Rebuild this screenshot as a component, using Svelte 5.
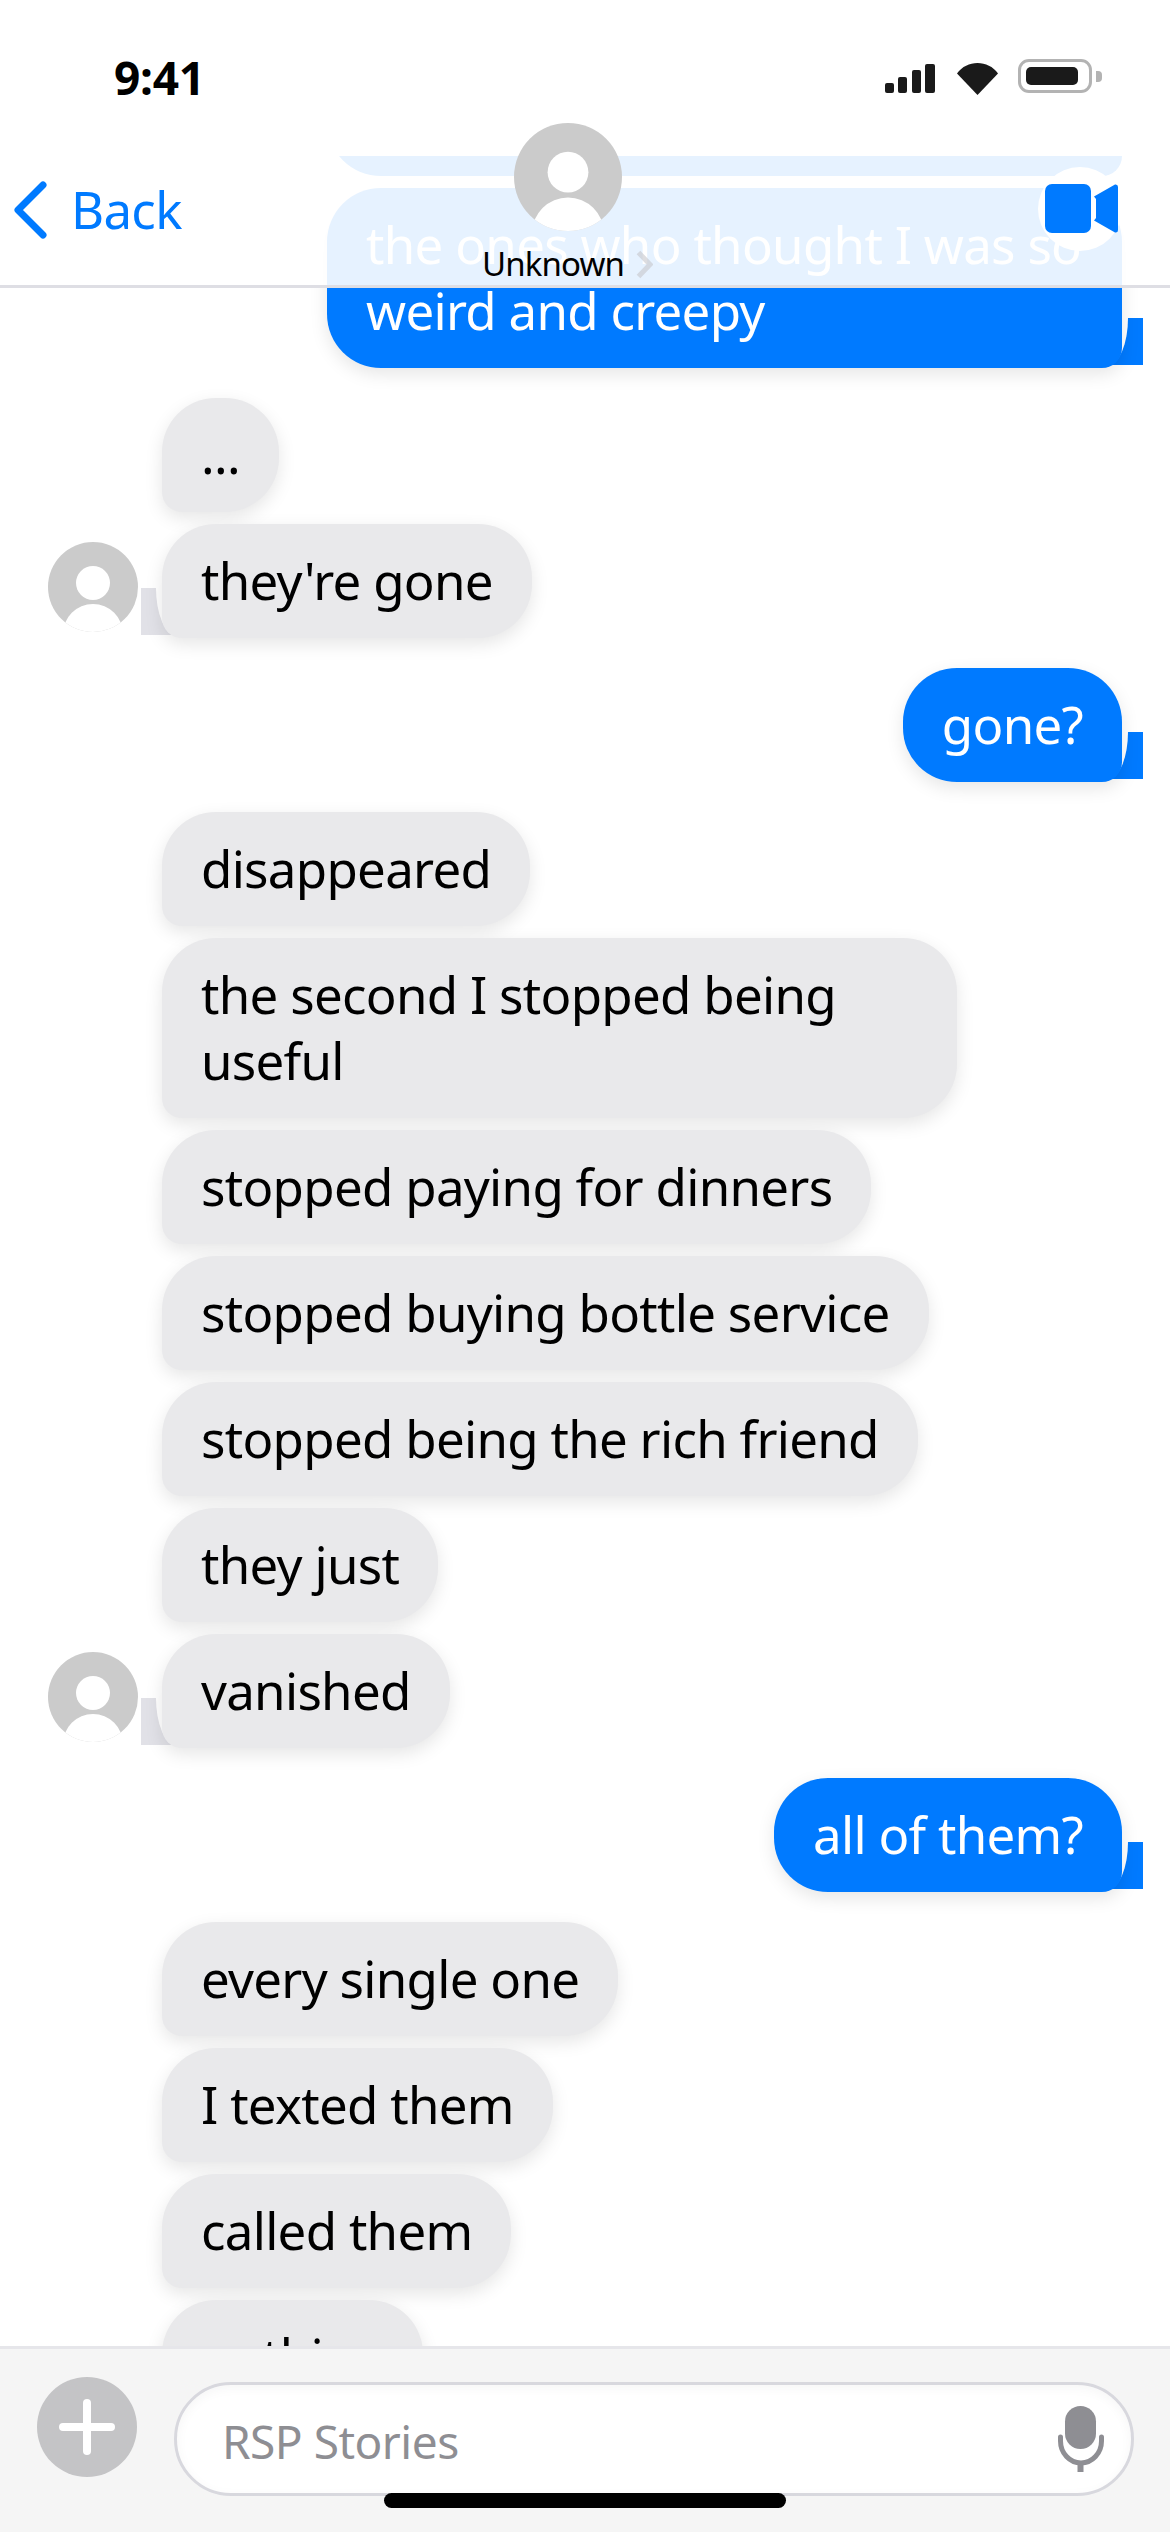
<script>
	// side: 'in' | 'out', tail/avatar on the last bubble of a run
	const messages = [
		{ side: 'out', text: 'the ones who thought I was so weird and creepy', tail: true },
		{ side: 'in', text: '...', first: true },
		{ side: 'in', text: "they're gone", tail: true },
		{ side: 'out', text: 'gone?', tail: true, first: true },
		{ side: 'in', text: 'disappeared', first: true },
		{ side: 'in', text: 'the second I stopped being useful' },
		{ side: 'in', text: 'stopped paying for dinners' },
		{ side: 'in', text: 'stopped buying bottle service' },
		{ side: 'in', text: 'stopped being the rich friend' },
		{ side: 'in', text: 'they just' },
		{ side: 'in', text: 'vanished', tail: true },
		{ side: 'out', text: 'all of them?', tail: true, first: true },
		{ side: 'in', text: 'every single one', first: true },
		{ side: 'in', text: 'I texted them' },
		{ side: 'in', text: 'called them' },
		{ side: 'in', text: 'nothing' }
	];
</script>

{#snippet avatar(size)}
	<svg class="avatar" width={size} height={size} viewBox="0 0 90 90">
		<defs>
			<clipPath id="avatar-clip"><circle cx="45" cy="45" r="45" /></clipPath>
		</defs>
		<g clip-path="url(#avatar-clip)">
			<rect width="90" height="90" fill="#cbcbcb" />
			<circle cx="45" cy="41" r="17" fill="#fff" />
			<circle cx="45" cy="92" r="30" fill="#fff" />
		</g>
	</svg>
{/snippet}

<div class="phone">
	<header class="status">
		<span class="time">9:41</span>
		<div class="indicators">
			<svg width="50" height="30" viewBox="0 0 50 30" fill="#1a1a1a">
				<rect x="0" y="19" width="9" height="10" rx="2" />
				<rect x="13" y="13" width="9" height="16" rx="2" />
				<rect x="27" y="6" width="9" height="23" rx="2" />
				<rect x="40" y="0" width="10" height="29" rx="2" />
			</svg>
			<svg class="wifi" width="41" height="32" viewBox="0 0 41 32">
				<path d="M20.500 32 0 10.500C5 3.500 12.500 0 20.500 0S36 3.500 41 10.500Z" fill="#1a1a1a" />
			</svg>
			<div class="battery"><div class="charge"></div></div>
			<div class="nub"></div>
		</div>
	</header>

	<main class="thread">
		<div class="stub"></div>
		{#each messages as m}
			<div class="row {m.side}" class:first={m.first}>
				{#if m.side === 'in'}
					<div class="slot">
						{#if m.tail}{@render avatar(90)}{/if}
					</div>
				{/if}
				<div class="bubble" class:tail={m.tail}>{m.text}</div>
			</div>
		{/each}
	</main>

	<nav class="nav">
		<div class="back">
			<svg width="33" height="58" viewBox="0 0 33 58">
				<path d="M29 4 4 29l25 25" fill="none" stroke="#007aff" stroke-width="7" stroke-linecap="round" stroke-linejoin="round" />
			</svg>
			<span>Back</span>
		</div>
		<div class="contact">
			{@render avatar(108)}
			<div class="name">
				<span>Unknown</span>
				<svg width="17" height="29" viewBox="0 0 17 29">
					<path d="M2.500 2.500 14 14.500 2.500 26.500" fill="none" stroke="#c7c7cc" stroke-opacity=".6" stroke-width="5" />
				</svg>
			</div>
		</div>
		<div class="video">
			<svg width="73" height="49" viewBox="0 0 73 49" fill="#007aff">
				<rect x="0" y="0" width="46" height="49" rx="7" />
				<path d="M49 12.500 70 .500Q73 0 73 3V46Q73 49 70 48.500L49 36.500 51 34V15Z" />
			</svg>
		</div>
	</nav>

	<footer class="composer">
		<div class="plus"></div>
		<div class="field">
			<span>RSP Stories</span>
			<svg width="46" height="66" viewBox="0 0 46 66" fill="none">
				<rect x="7" y="0" width="31" height="43" rx="15.500" fill="#8e8e93" />
				<path d="M2.500 31v4a20.500 22 0 0 0 41 0v-4" stroke="#8e8e93" stroke-width="5" stroke-linecap="round" />
				<rect x="19.500" y="56" width="6" height="10" fill="#8e8e93" />
			</svg>
		</div>
		<div class="home"></div>
	</footer>
</div>

<style>
	:global(body) {
		margin: 0;
		background: #fff;
	}
	.phone {
		position: relative;
		width: 1170px;
		height: 2532px;
		overflow: hidden;
		display: flex;
		flex-direction: column;
		background: #fff;
		font-family: 'Noto Sans', sans-serif;
	}
	.status {
		flex: 0 0 156px;
		box-sizing: border-box;
		padding: 44px 68px 0 114px;
		display: flex;
		justify-content: space-between;
		align-items: flex-start;
	}
	.time {
		font-size: 46px;
		line-height: 66px;
		font-weight: 700;
		letter-spacing: -0.3px;
		color: #000;
	}
	.indicators {
		display: flex;
		align-items: flex-start;
		margin-top: 15px;
	}
	.indicators svg {
		display: block;
		margin-top: 5px;
	}
	.wifi {
		margin-left: 22px;
		margin-top: 4px !important;
	}
	.battery {
		box-sizing: border-box;
		width: 74px;
		height: 34px;
		margin-left: 20px;
		border: 3px solid #b3b3b3;
		border-radius: 11px;
		padding: 5px;
	}
	.charge {
		width: 52px;
		height: 18px;
		border-radius: 5px;
		background: #1a1a1a;
	}
	.nub {
		width: 6px;
		height: 11px;
		margin: 12px 0 0 4px;
		border-radius: 0 4px 4px 0;
		background: #b3b3b3;
	}

	.thread {
		flex: 1;
		min-height: 0;
		overflow: hidden;
		isolation: isolate;
		box-sizing: border-box;
		padding: 0 48px;
		display: flex;
		flex-direction: column;
		gap: 12px;
	}
	/* bubble scrolled away under the status bar, only its bottom edge shows */
	.stub {
		flex: 0 0 180px;
		margin: -160px 0 0 279px;
		border-radius: 54px 54px 20px 54px;
		background: #007aff;
	}
	.row {
		display: flex;
		flex: none;
	}
	.row.first {
		margin-top: 18px;
	}
	.row.out {
		justify-content: flex-end;
	}
	.slot {
		flex: 0 0 90px;
		margin-right: 24px;
		align-self: flex-end;
		margin-bottom: 6px;
		height: 90px;
	}
	.avatar {
		display: block;
	}
	.bubble {
		position: relative;
		box-sizing: border-box;
		max-width: 795px;
		padding: 23px 39px 25px;
		border-radius: 54px;
		font-size: 51px;
		line-height: 66px;
		letter-spacing: -0.7px;
		box-shadow: 0 6px 18px rgba(0, 0, 0, 0.1);
	}
	.in .bubble {
		background: #e9e9eb;
		color: #000;
		border-bottom-left-radius: 20px;
	}
	.out .bubble {
		background: #007aff;
		color: #fff;
		border-bottom-right-radius: 20px;
	}
	/* the tail: a coloured block with a white block cutting its inner curve */
	.tail::before,
	.tail::after {
		content: '';
		position: absolute;
		bottom: 3px;
		height: 47px;
		z-index: -1;
	}
	.out .tail::before {
		right: -21px;
		width: 50px;
		background: #007aff;
	}
	.out .tail::after {
		right: -6px;
		width: 40px;
		background: #fff;
		border-bottom-right-radius: 20px 47px;
	}
	.in .tail::before {
		left: -21px;
		width: 50px;
		background: #e1e1e7;
	}
	.in .tail::after {
		left: -6px;
		width: 40px;
		background: #fff;
		border-bottom-left-radius: 20px 47px;
	}

	.nav {
		position: absolute;
		top: 156px;
		left: 0;
		right: 0;
		height: 132px;
		box-sizing: border-box;
		border-bottom: 3px solid #dedee4;
		background: rgba(255, 255, 255, 0.9);
	}
	.back {
		position: absolute;
		left: 14px;
		top: 25px;
		display: flex;
		align-items: center;
		gap: 24px;
		color: #007aff;
		font-size: 51px;
		line-height: 58px;
		letter-spacing: -0.7px;
	}
	.back span {
		margin-top: -2px;
	}
	.back svg {
		display: block;
	}
	.contact {
		position: absolute;
		top: -33px;
		left: 484px;
		width: 167px;
		display: flex;
		flex-direction: column;
		align-items: center;
	}
	.name {
		display: flex;
		align-items: center;
		gap: 12px;
		margin-top: 13px;
		font-size: 33px;
		line-height: 40px;
		letter-spacing: -0.9px;
		color: #000;
		white-space: nowrap;
	}
	.video {
		position: absolute;
		left: 1038px;
		top: 11px;
		width: 84px;
		height: 84px;
		box-sizing: border-box;
		padding: 17px 0 0 7px;
		border-radius: 50%;
		background: #fff;
	}
	.video svg {
		display: block;
	}

	.composer {
		flex: 0 0 186px;
		box-sizing: border-box;
		border-top: 3px solid #e6e6ea;
		background: #f5f5f5;
		padding: 28px 36px 0 37px;
		display: flex;
		align-items: flex-start;
		gap: 37px;
	}
	.plus {
		position: relative;
		flex: 0 0 100px;
		height: 100px;
		border-radius: 50%;
		background: #c4c4c6;
	}
	.plus::before,
	.plus::after {
		content: '';
		position: absolute;
		background: #fff;
		border-radius: 4px;
	}
	.plus::before {
		left: 22px;
		top: 46px;
		width: 56px;
		height: 8px;
	}
	.plus::after {
		left: 46px;
		top: 22px;
		width: 8px;
		height: 56px;
	}
	.field {
		flex: 1;
		height: 114px;
		margin-top: 5px;
		box-sizing: border-box;
		border: 3px solid #d8d8de;
		border-radius: 57px;
		background: #fff;
		box-shadow: inset 0 3px 12px rgba(0, 0, 0, 0.04);
		padding: 0 27px 0 45px;
		display: flex;
		align-items: center;
		justify-content: space-between;
		color: #8e8e93;
		font-size: 46px;
		letter-spacing: -0.5px;
	}
	.field span {
		margin-top: 4px;
	}
	.field svg {
		display: block;
	}
	.home {
		position: absolute;
		left: 384px;
		bottom: 24px;
		width: 402px;
		height: 15px;
		border-radius: 8px;
		background: #000;
	}
</style>
